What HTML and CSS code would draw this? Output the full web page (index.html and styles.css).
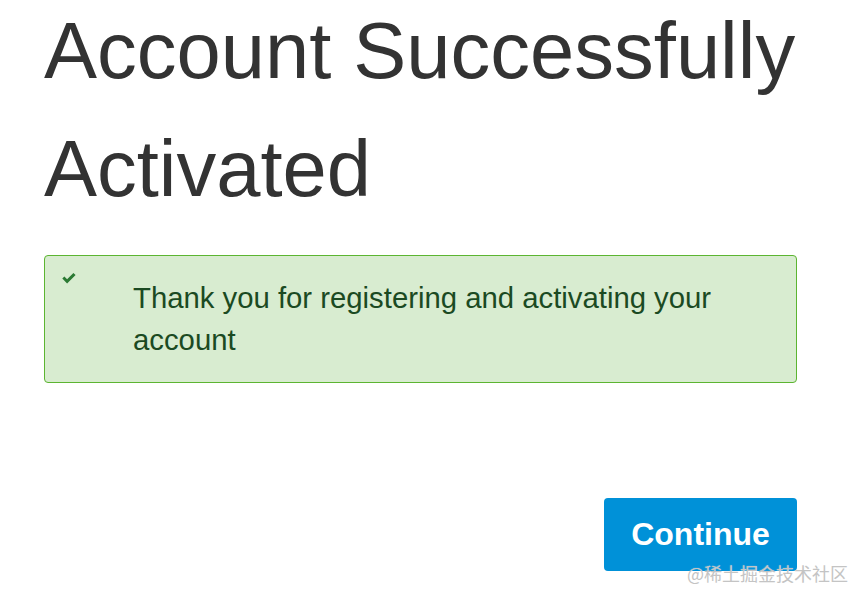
FILE: index.html
```html
<!DOCTYPE html>
<html lang="en">
<head>
<meta charset="utf-8">
<title>Account Successfully Activated</title>
<link rel="stylesheet" href="styles.css">
</head>
<body>
<main class="page">
  <h1 class="title">Account Successfully Activated</h1>
  <div class="alert">
    <svg class="check" viewBox="0 0 14 11" width="14" height="11" aria-hidden="true">
      <path d="M0.3 5.6 L2.4 3.5 L5.1 6.2 L11.4 0 L13.6 2.1 L5.1 10.6 Z" fill="currentColor"/>
    </svg>
    <p class="alert-text">Thank you for registering and activating your account</p>
  </div>
  <div class="actions">
    <button class="btn" type="button">Continue</button>
  </div>
</main>
<div class="watermark">@稀土掘金技术社区</div>
</body>
</html>
```

FILE: styles.css
```css
html, body {
  margin: 0;
  padding: 0;
  background: #ffffff;
}
body {
  font-family: "Liberation Sans", Arial, sans-serif;
  color: #333333;
  overflow: hidden;
  height: 591px;
}
.page {
  width: 753px;
  padding: 0 0 0 44px;
}
.title {
  margin: -8px 0 0 0;
  width: 800px;
  font-size: 79.5px;
  line-height: 118px;
  font-weight: 400;
  color: #333333;
}
.alert {
  margin-top: 27px;
  display: flex;
  align-items: flex-start;
  background: #d8ecd0;
  border: 1px solid #5cb531;
  border-radius: 4px;
  padding: 21px 20px 21px 17px;
  height: 84px;
}
.check {
  color: #2b7a33;
  flex: none;
  margin-top: -4px;
  margin-right: 57px;
}
.alert-text {
  margin: 0;
  font-size: 29.3px;
  line-height: 42px;
  color: #1b4a22;
}
.actions {
  display: flex;
  justify-content: flex-end;
  margin-top: 115px;
}
.btn {
  font-family: "Liberation Sans", Arial, sans-serif;
  font-weight: 700;
  font-size: 32px;
  line-height: 37px;
  color: #ffffff;
  background: #0091d8;
  border: none;
  border-radius: 4px;
  width: 193px;
  height: 73px;
  padding: 0;
}
.watermark {
  position: absolute;
  right: 6px;
  top: 561px;
  font-family: "Noto Sans CJK SC", sans-serif;
  font-size: 18px;
  line-height: 24px;
  color: #c4c4c4;
  text-shadow: 0 0 1px rgba(255,255,255,0.6);
}
```
